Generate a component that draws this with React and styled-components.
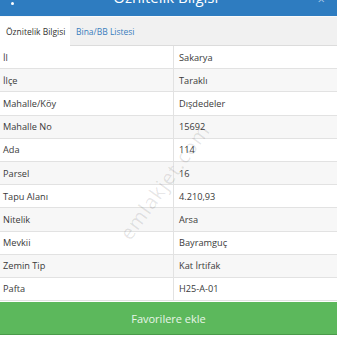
import React from 'react';
import styled, { createGlobalStyle } from 'styled-components';

const GlobalStyle = createGlobalStyle`
  html, body {
    margin: 0;
    padding: 0;
    background: #1f2a1c;
  }
  * {
    box-sizing: border-box;
  }
`;

const rows = [
  ['İl', 'Sakarya'],
  ['İlçe', 'Taraklı'],
  ['Mahalle/Köy', 'Dışdedeler'],
  ['Mahalle No', '15692'],
  ['Ada', '114'],
  ['Parsel', '16'],
  ['Tapu Alanı', '4.210,93'],
  ['Nitelik', 'Arsa'],
  ['Mevkii', 'Bayramguç'],
  ['Zemin Tip', 'Kat İrtifak'],
  ['Pafta', 'H25-A-01'],
];

const Page = styled.div`
  width: 337px;
  height: 338px;
  overflow: hidden;
  position: relative;
  display: flex;
  flex-direction: column;
  font-family: 'Open Sans', 'Liberation Sans', sans-serif;
  background: #fff;
`;

const Header = styled.div`
  height: 16px;
  flex-shrink: 0;
  background: #2e7cc0;
  display: flex;
  align-items: flex-end;
  justify-content: space-between;
  padding: 0 10px 0 10px;
  overflow: hidden;
`;

const Title = styled.div`
  color: #fff;
  font-size: 15px;
  line-height: 20px;
  margin-bottom: 9px;
`;

const Kebab = styled.div`
  width: 3px;
  display: flex;
  flex-direction: column;
  gap: 2px;
  margin-bottom: 11px;
  margin-left: 1px;

  span {
    width: 3px;
    height: 3px;
    border-radius: 50%;
    background: #fff;
  }
`;

const Close = styled.div`
  color: #a9c7e6;
  font-size: 13px;
  line-height: 13px;
  margin-bottom: 10px;
  margin-right: 2px;
`;

const TabBar = styled.div`
  height: 30px;
  flex-shrink: 0;
  display: flex;
  align-items: stretch;
  background: #f1f1f1;
  border-top: 1px solid #fafafa;
  border-bottom: 1px solid #dcdcdc;
`;

const Tab = styled.div`
  display: flex;
  align-items: center;
  padding: 0 6px;
  font-size: 8.5px;
  white-space: nowrap;
  color: ${(p) => (p.$active ? '#333' : '#3a7dbd')};
  background: ${(p) => (p.$active ? '#fff' : 'transparent')};
  margin-bottom: ${(p) => (p.$active ? '-1px' : '0')};
  width: ${(p) => (p.$active ? '70px' : 'auto')};
`;

const Table = styled.div`
  display: flex;
  flex-direction: column;
`;

const Row = styled.div`
  display: grid;
  grid-template-columns: 173px 1fr;
  height: 23.2px;
  border-bottom: 1px solid #e2e2e2;
  background: ${(p) => (p.$odd ? '#f7f7f7' : '#fff')};
  font-size: 9.2px;
  color: #3a3a3a;
`;

const Cell = styled.div`
  display: flex;
  align-items: center;
  padding-left: ${(p) => (p.$value ? '5px' : '3px')};
  border-left: ${(p) => (p.$value ? '1px solid #e2e2e2' : 'none')};
`;

const Button = styled.div`
  height: 33px;
  flex-shrink: 0;
  margin-top: 1px;
  background: #5cb85c;
  color: #e8f5e8;
  font-size: 11px;
  display: flex;
  align-items: center;
  justify-content: center;
  border-bottom: 1px solid #4a9a4a;
`;

const Watermark = styled.div`
  position: absolute;
  left: 96px;
  top: 168px;
  font-size: 20px;
  color: rgba(0, 0, 0, 0.1);
  transform: rotate(-54deg);
  letter-spacing: 1px;
  pointer-events: none;
`;

export default function App() {
  return (
    <>
      <GlobalStyle />
      <Page>
        <Header>
          <Kebab>
            <span />
          </Kebab>
          <Title>Öznitelik Bilgisi</Title>
          <Close>×</Close>
        </Header>
        <TabBar>
          <Tab $active>Öznitelik Bilgisi</Tab>
          <Tab>Bina/BB Listesi</Tab>
        </TabBar>
        <Table>
          {rows.map(([k, v], i) => (
            <Row key={k} $odd={i % 2 === 1}>
              <Cell>{k}</Cell>
              <Cell $value>{v}</Cell>
            </Row>
          ))}
        </Table>
        <Button>Favorilere ekle</Button>
        <Watermark>emlakjet.com</Watermark>
      </Page>
    </>
  );
}
